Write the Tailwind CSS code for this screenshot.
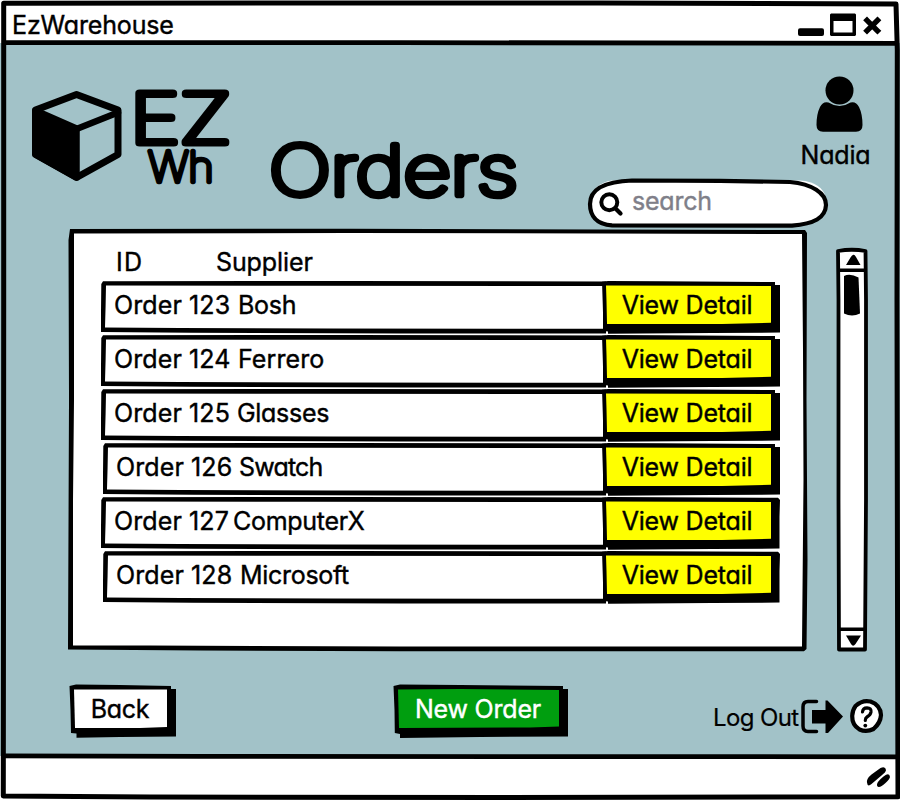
<!DOCTYPE html>
<html lang="en">
<head>
<meta charset="utf-8">
<title>EzWarehouse</title>
<script src="https://cdn.jsdelivr.net/npm/@tailwindcss/browser@4"></script>
</head>
<body class="bg-white">
<svg class="hidden">
  <symbol id="bar" viewBox="0 0 505 53" preserveAspectRatio="none">
    <path d="M2 .3L250 0L505 .5V52.500L300 52.500L90 51.800L-.5 51L0 30L.3 3Z"/>
    <path fill="#fff" d="M5 4.600L200 4.800L502 5V47.800L230 47.600L80 47L4 46.600L4.600 25Z"/>
  </symbol>
  <symbol id="btn-a" viewBox="0 0 178 53">
    <path d="M0 .8L6 0L60 .3L173 1V4H178V51.6L110 52L6 52.8V50.5L1.5 50L.8 25Z"/>
    <path fill="#ff0" d="M4 4.5L169 5V41.8L120 43H5L4.5 20Z"/>
  </symbol>
  <symbol id="btn-b" viewBox="0 0 178 53">
    <path d="M0 .8L6 0L60 .3L176 .8L178 3L177.5 20V51.6L110 52L6 52.8V50.5L1.5 50L.8 25Z"/>
    <path fill="#ff0" d="M4 4.5L169 5V41.8L120 43H5L4.5 20Z"/>
  </symbol>
</svg>
<div class="relative flex h-[800px] w-[900px] flex-col overflow-hidden font-[Inter,sans-serif] text-[25px] leading-[30px] tracking-[-0.3px] whitespace-nowrap text-black [-webkit-text-stroke:0.4px] [font-feature-settings:'cv11']">

  <header class="flex h-[43px] shrink-0 items-start justify-between pr-[17px] pl-[12px]">
    <h1 class="pt-[10px] tracking-[-0.15px]">EzWarehouse</h1>
    <svg class="mt-[13px] h-[24px] w-[86px]" viewBox="797 13 86 24">
      <rect x="798" y="28.3" width="26" height="7.8" rx="2"/>
      <path fill-rule="evenodd" d="M831 13.5H855L856 14.5V35L855 36H831L830 35V14.5ZM833.5 21V32.5H852.5V21Z"/>
      <path d="M867 20.300L877.500 30.800M877.500 20.300L867 30.800" stroke="#000" stroke-width="5.400" stroke-linecap="square"/>
    </svg>
  </header>

  <main class="flex h-[713px] shrink-0 flex-col bg-[#a2c2c8]">
    <div class="flex h-[185px] justify-between pr-[29px] pl-[28px]">
      <svg class="mt-[37px] h-[130px] w-[500px] overflow-visible" viewBox="28 80 500 130" stroke-linejoin="round" stroke-linecap="round">
        <path d="M35.500 110L76.500 94.500L118 110V154.500L76.500 177.500L35.500 154.500Z" fill="none" stroke="#000" stroke-width="7"/>
        <path d="M35.500 110.500L76.500 128.500V177.500L35.500 154.500Z" stroke="#000" stroke-width="6.500"/>
        <path d="M76.500 129L118 112.500" fill="none" stroke="#000" stroke-width="6.500"/>
        <g stroke="#000" font-weight="100">
          <text x="130" y="143" font-size="68.500" stroke-width="7" textLength="101" lengthAdjust="spacingAndGlyphs">EZ</text>
          <text x="148" y="182" font-size="42" stroke-width="4.400" textLength="65.500" lengthAdjust="spacingAndGlyphs">Wh</text>
          <text x="269" y="194.500" font-size="68.500" stroke-width="6.700" textLength="248.500" lengthAdjust="spacingAndGlyphs">Orders</text>
        </g>
      </svg>
      <div class="flex w-[285px] flex-col items-end">
        <div class="mt-[33px] flex w-[73px] shrink-0 flex-col items-center">
          <svg class="relative left-[5px] h-[56px] w-[47px]" viewBox="816.5 76 47 56">
            <circle cx="840" cy="90.500" r="14"/>
            <path d="M829 102.500Q840 109.500 851 102.500Q856.500 101 859.500 107Q863 114 863 125Q863 131.700 856.500 131.700H823.500Q817 131.700 817 125Q817 114 820.500 107Q823.500 101 829 102.500Z"/>
          </svg>
          <span class="mt-[8px] pl-[2px] tracking-[-0.2px]">Nadia</span>
        </div>
        <div class="relative z-10 mt-[8px] mr-[42px] flex h-[51px] w-[242px] shrink-0 pt-[8px] pl-[45px] text-[#7f7f89]">
          <svg class="absolute inset-0 h-full w-full" viewBox="587 178 242 51">
            <path d="M612 180.500H800Q822 182 826 198L820 215H596L589.500 200Q594 183 612 180.500Z" fill="#fff"/>
            <path d="M632 180.500L720 180.800L790 182C812 184 826 193 826 205C825.500 218 814 223.800 792 225.600L612 225.300C596 224.500 590 215 590 204C590 189 606 181.500 632 180.500Z" fill="#fff" stroke="#000" stroke-width="4.200"/>
            <circle cx="609.300" cy="202.300" r="8" fill="none" stroke="#000" stroke-width="4"/>
            <path d="M615.500 208.500L620.500 213.500" stroke="#000" stroke-width="4.200" stroke-linecap="round"/>
          </svg>
          <span class="relative tracking-[-0.2px]">search</span>
        </div>
      </div>
    </div>

    <div class="flex h-[424px] items-start pl-[68px]">
      <section class="relative h-[424px] w-[740px] pt-[19px] pl-[33px]">
        <svg class="absolute inset-0 h-full w-full" viewBox="68 228 740 424">
          <path d="M70 229L350 228.700L600 229.500L805 230L807 233L806.500 400L807.500 560L806.500 649L804 651.300L400 651.300L200 650.500L68 649.500L69 400L68.500 240Z"/>
          <path d="M74 233.500L350 233L600 233.500L802 234L803 350L803.500 480L802 646.500L400 646.500L150 645.500L73 645.500V500L74 400Z" fill="#fff"/>
        </svg>
        <div class="relative flex h-[34px] pl-[15px]">
          <span class="w-[100px] tracking-[1.2px]">ID</span><span class="tracking-[-0.1px]">Supplier</span>
        </div>
        <div class="relative flex w-[679px] flex-col gap-px">
          <div class="flex h-[53px]">
            <div class="relative w-[501px] pt-[9px] pl-[13px]"><svg class="absolute inset-0 h-full w-[505px] overflow-visible"><use href="#bar"/></svg><span class="relative inline-block w-[124px] tracking-[0.1px]">Order 123</span><span class="relative">Bosh</span></div>
            <button class="relative h-[53px] w-[178px] pr-[8px] pb-[5px] tracking-[-0.2px]"><svg class="absolute inset-0 h-full w-full"><use href="#btn-a"/></svg><span class="relative">View Detail</span></button>
          </div>
          <div class="flex h-[53px]">
            <div class="relative w-[501px] pt-[9px] pl-[13px]"><svg class="absolute inset-0 h-full w-[505px] overflow-visible"><use href="#bar"/></svg><span class="relative inline-block w-[124px] tracking-[0.1px]">Order 124</span><span class="relative tracking-[0.1px]">Ferrero</span></div>
            <button class="relative h-[53px] w-[178px] pr-[8px] pb-[5px] tracking-[-0.2px]"><svg class="absolute inset-0 h-full w-full"><use href="#btn-a"/></svg><span class="relative">View Detail</span></button>
          </div>
          <div class="flex h-[53px]">
            <div class="relative w-[501px] pt-[9px] pl-[13px]"><svg class="absolute inset-0 h-full w-[505px] overflow-visible"><use href="#bar"/></svg><span class="relative inline-block w-[123px] tracking-[0.1px]">Order 125</span><span class="relative">Glasses</span></div>
            <button class="relative h-[53px] w-[178px] pr-[8px] pb-[5px] tracking-[-0.2px]"><svg class="absolute inset-0 h-full w-full"><use href="#btn-a"/></svg><span class="relative">View Detail</span></button>
          </div>
          <div class="flex h-[53px]">
            <div class="relative ml-[2px] w-[499px] pt-[9px] pl-[13px]"><svg class="absolute inset-0 h-full w-[503px] overflow-visible"><use href="#bar"/></svg><span class="relative inline-block w-[123px] tracking-[0.1px]">Order 126</span><span class="relative tracking-[-0.8px]">Swatch</span></div>
            <button class="relative h-[53px] w-[178px] pr-[8px] pb-[5px] tracking-[-0.2px]"><svg class="absolute inset-0 h-full w-full"><use href="#btn-a"/></svg><span class="relative">View Detail</span></button>
          </div>
          <div class="flex h-[53px]">
            <div class="relative w-[501px] pt-[9px] pl-[13px]"><svg class="absolute inset-0 h-full w-[505px] overflow-visible"><use href="#bar"/></svg><span class="relative inline-block w-[119px] tracking-[0.1px]">Order 127</span><span class="relative">ComputerX</span></div>
            <button class="relative h-[53px] w-[178px] pr-[8px] pb-[5px] tracking-[-0.2px]"><svg class="absolute inset-0 h-full w-full"><use href="#btn-b"/></svg><span class="relative">View Detail</span></button>
          </div>
          <div class="flex h-[53px]">
            <div class="relative ml-[2px] w-[499px] pt-[9px] pl-[13px]"><svg class="absolute inset-0 h-full w-[503px] overflow-visible"><use href="#bar"/></svg><span class="relative inline-block w-[124px] tracking-[0.1px]">Order 128</span><span class="relative">Microsoft</span></div>
            <button class="relative h-[53px] w-[178px] pr-[8px] pb-[5px] tracking-[-0.2px]"><svg class="absolute inset-0 h-full w-full"><use href="#btn-b"/></svg><span class="relative">View Detail</span></button>
          </div>
        </div>
      </section>
      <svg class="mt-[19px] ml-[27px] h-[406px] w-[34px]" viewBox="835 247 34 406">
        <path d="M838 251Q852 248.500 865.500 251L866 300V500L865 649.500H839L838.500 500V300Z" fill="#fff" stroke="#000" stroke-width="3.800" stroke-linejoin="round"/>
        <path d="M837 270.300H867M838 629.300H866" stroke="#000" stroke-width="3.600"/>
        <path d="M846 265L850.500 257.500Q853.500 252.500 856 257L860.500 265ZM846 635.500H861L855.500 644Q853 647.500 851 644Z"/>
        <path d="M844 276Q850 272.800 858.500 277.500L860 313.500Q852 317.500 844 313.500Z"/>
      </svg>
    </div>

    <div class="flex h-[104px] items-start pl-[69px]">
      <button class="relative mt-[32px] h-[54px] w-[108px] pr-[6px] pb-[5px]"><svg class="absolute inset-0 h-full w-full" viewBox="69 684 108 54">
        <path d="M69.500 686L76 684.500L120 685L171 686V689H176V736.500L120 737L76.500 737.800V733.500L71 733L70.500 710Z"/><path fill="#fff" d="M74 689.500L167 689.500V727L140 728H75Z"/></svg><span class="relative">Back</span></button>
      <button class="relative mt-[32px] ml-[216px] h-[54px] w-[176px] pr-[6px] pb-[5px] tracking-[-0.2px] text-white"><svg class="absolute inset-0 h-full w-full" viewBox="393 684 176 54">
        <path d="M393.500 686L400 684.500L460 685L563 686V689H568V736.500L480 737L400 738V734L394.800 733L394.500 710Z"/><path fill="#009e0f" d="M398 689.500L460 689L559 690V726.500L530 727.500L399 728Z"/></svg><span class="relative">New Order</span></button>
      <div class="mt-[45px] ml-[143px] flex items-start">
        <span class="w-[88px] pt-[6px] pl-px text-[24px] tracking-[-0.6px] [-webkit-text-stroke:0.2px]">Log Out</span>
        <svg class="h-[38px] w-[44px]" viewBox="800 698 44 38">
          <path d="M816.500 702.500H808Q803 702.500 803 708V727Q803 732.500 808 732.500H816.500" fill="none" stroke="#000" stroke-width="3.500" stroke-linecap="round"/>
          <path d="M812 711H825.500V701.500H827.500L843 717.500L828 734H825.500V724.500H812Z"/>
        </svg>
        <svg class="ml-[5px] h-[38px] w-[36px]" viewBox="848.500 698 36 38">
          <path d="M855 707Q862 700.500 870 702.500Q880 706 880.500 716Q880 724 873 730Q866 733.500 859 730.500Q851.500 726 851.700 717Q852 711 855 707Z" fill="#fff" stroke="#000" stroke-width="4.200"/>
          <path d="M862 713Q862.300 708.800 866.500 708.800Q871 709 870.500 713Q870 716 866.500 718Q864.800 719 864.800 721.500" fill="none" stroke="#000" stroke-width="3.200" stroke-linecap="round"/><circle cx="864.800" cy="726.600" r="1.900"/>
        </svg>
      </div>
    </div>
  </main>

  <footer class="flex grow items-center justify-end pr-[9px]">
    <svg class="h-[24px] w-[26px]" viewBox="865.500 765.500 26 24">
      <path d="M867.500 782Q867 778 872 774L881 767.500Q886 765.500 886.500 769.500Q886.500 771.500 882 775L872 783.500Q868 787 867.500 782ZM877.500 785Q877 781.500 884 776Q890 771.500 890.500 776.500Q890 779 886 782.500Q879 789 877.500 785Z"/>
    </svg>
  </footer>

  <svg class="pointer-events-none absolute inset-0 h-full w-full" viewBox="0 0 900 800" fill="none" stroke="#000" stroke-linejoin="round">
    <path d="M3.700 3.300L300 3L600 3L896 4L897.300 50L897 300L897.500 600L898 796.800L500 797.500L150 797L3.300 796L3.500 600L3.700 300Z" stroke-width="5"/>
    <path d="M2 42.600H400L897 43.400M3 755.900L200 756.400L898 756.800" stroke-width="4.800"/>
  </svg>
</div>
</body>
</html>
